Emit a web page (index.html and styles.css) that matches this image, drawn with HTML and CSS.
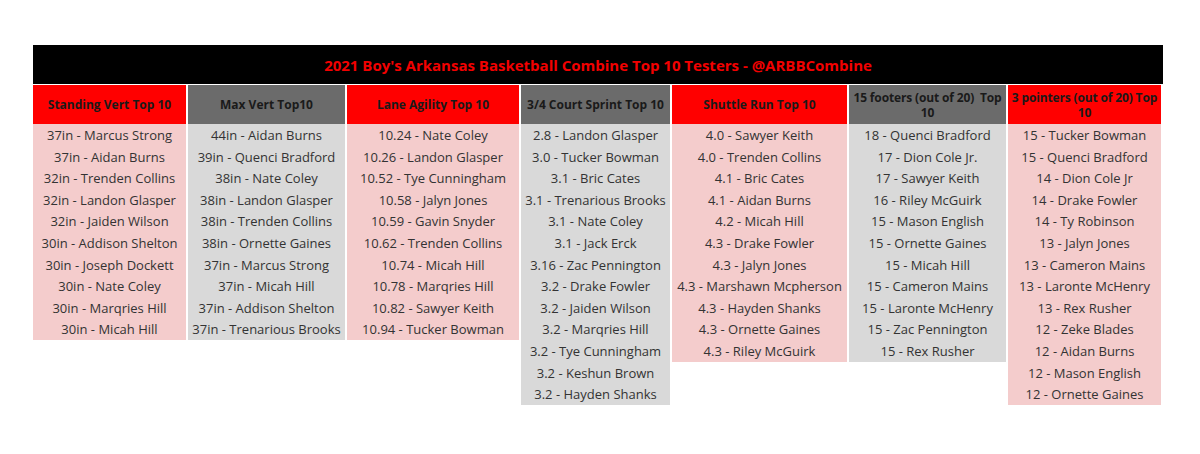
FILE: index.html
```html
<!DOCTYPE html>
<html>
<head>
<meta charset="utf-8">
<link rel="stylesheet" href="styles.css">
</head>
<body>
<div class="sheet">
  <div class="title">2021 Boy's Arkansas Basketball Combine Top 10 Testers - @ARBBCombine</div>
  <div class="cols">
    <div class="col red w1">
      <div class="head">Standing Vert Top 10</div>
      <div class="cell">37in - Marcus Strong</div>
      <div class="cell">37in - Aidan Burns</div>
      <div class="cell">32in - Trenden Collins</div>
      <div class="cell">32in - Landon Glasper</div>
      <div class="cell">32in - Jaiden Wilson</div>
      <div class="cell">30in - Addison Shelton</div>
      <div class="cell">30in - Joseph Dockett</div>
      <div class="cell">30in - Nate Coley</div>
      <div class="cell">30in - Marqries Hill</div>
      <div class="cell">30in - Micah Hill</div>
    </div>
    <div class="col gray w2">
      <div class="head">Max Vert Top10</div>
      <div class="cell">44in - Aidan Burns</div>
      <div class="cell">39in - Quenci Bradford</div>
      <div class="cell">38in - Nate Coley</div>
      <div class="cell">38in - Landon Glasper</div>
      <div class="cell">38in - Trenden Collins</div>
      <div class="cell">38in - Ornette Gaines</div>
      <div class="cell">37in - Marcus Strong</div>
      <div class="cell">37in - Micah Hill</div>
      <div class="cell">37in - Addison Shelton</div>
      <div class="cell">37in - Trenarious Brooks</div>
    </div>
    <div class="col red w3">
      <div class="head">Lane Agility Top 10</div>
      <div class="cell">10.24 - Nate Coley</div>
      <div class="cell">10.26 - Landon Glasper</div>
      <div class="cell">10.52 - Tye Cunningham</div>
      <div class="cell">10.58 - Jalyn Jones</div>
      <div class="cell">10.59 - Gavin Snyder</div>
      <div class="cell">10.62 - Trenden Collins</div>
      <div class="cell">10.74 - Micah Hill</div>
      <div class="cell">10.78 - Marqries Hill</div>
      <div class="cell">10.82 - Sawyer Keith</div>
      <div class="cell">10.94 - Tucker Bowman</div>
    </div>
    <div class="col gray w4">
      <div class="head">3/4 Court Sprint Top 10</div>
      <div class="cell">2.8 - Landon Glasper</div>
      <div class="cell">3.0 - Tucker Bowman</div>
      <div class="cell">3.1 - Bric Cates</div>
      <div class="cell">3.1 - Trenarious Brooks</div>
      <div class="cell">3.1 - Nate Coley</div>
      <div class="cell">3.1 - Jack Erck</div>
      <div class="cell">3.16 - Zac Pennington</div>
      <div class="cell">3.2 - Drake Fowler</div>
      <div class="cell">3.2 - Jaiden Wilson</div>
      <div class="cell">3.2 - Marqries Hill</div>
      <div class="cell">3.2 - Tye Cunningham</div>
      <div class="cell">3.2 - Keshun Brown</div>
      <div class="cell">3.2 - Hayden Shanks</div>
    </div>
    <div class="col red w5">
      <div class="head">Shuttle Run Top 10</div>
      <div class="cell">4.0 - Sawyer Keith</div>
      <div class="cell">4.0 - Trenden Collins</div>
      <div class="cell">4.1 - Bric Cates</div>
      <div class="cell">4.1 - Aidan Burns</div>
      <div class="cell">4.2 - Micah Hill</div>
      <div class="cell">4.3 - Drake Fowler</div>
      <div class="cell">4.3 - Jalyn Jones</div>
      <div class="cell">4.3 - Marshawn Mcpherson</div>
      <div class="cell">4.3 - Hayden Shanks</div>
      <div class="cell">4.3 - Ornette Gaines</div>
      <div class="cell">4.3 - Riley McGuirk</div>
    </div>
    <div class="col gray w6">
      <div class="head"><span class="lines">15 footers (out of 20)&nbsp; Top<br>10</span></div>
      <div class="cell">18 - Quenci Bradford</div>
      <div class="cell">17 - Dion Cole Jr.</div>
      <div class="cell">17 - Sawyer Keith</div>
      <div class="cell">16 - Riley McGuirk</div>
      <div class="cell">15 - Mason English</div>
      <div class="cell">15 - Ornette Gaines</div>
      <div class="cell">15 - Micah Hill</div>
      <div class="cell">15 - Cameron Mains</div>
      <div class="cell">15 - Laronte McHenry</div>
      <div class="cell">15 - Zac Pennington</div>
      <div class="cell">15 - Rex Rusher</div>
    </div>
    <div class="col red w7">
      <div class="head"><span class="lines">3 pointers (out of 20) Top<br>10</span></div>
      <div class="cell">15 - Tucker Bowman</div>
      <div class="cell">15 - Quenci Bradford</div>
      <div class="cell">14 - Dion Cole Jr</div>
      <div class="cell">14 - Drake Fowler</div>
      <div class="cell">14 - Ty Robinson</div>
      <div class="cell">13 - Jalyn Jones</div>
      <div class="cell">13 - Cameron Mains</div>
      <div class="cell">13 - Laronte McHenry</div>
      <div class="cell">13 - Rex Rusher</div>
      <div class="cell">12 - Zeke Blades</div>
      <div class="cell">12 - Aidan Burns</div>
      <div class="cell">12 - Mason English</div>
      <div class="cell">12 - Ornette Gaines</div>
    </div>
  </div>
</div>
</body>
</html>
```

FILE: styles.css
```css
html, body {
  margin: 0;
  padding: 0;
  background: #ffffff;
}
body {
  font-family: "Open Sans", "Liberation Sans", sans-serif;
  color: #333333;
}
.sheet {
  width: 1130px;
  margin: 45px 0 0 33px;
}
.title {
  height: 39px;
  background: #000000;
  color: #f20000;
  font-weight: 700;
  font-size: 15px;
  display: flex;
  align-items: center;
  justify-content: center;
  margin-bottom: 1px;
}
.cols {
  display: flex;
  align-items: flex-start;
  gap: 2px;
}
.col {
  display: flex;
  flex-direction: column;
}
.w1 { width: 153px; }
.w2 { width: 157px; }
.w3 { width: 172px; }
.w4 { width: 149px; }
.w5 { width: 175px; }
.w6 { width: 157px; }
.w7 { width: 153px; }
.head {
  height: 39px;
  display: flex;
  align-items: center;
  justify-content: center;
  text-align: center;
  font-weight: 700;
  font-size: 12px;
  line-height: 15px;
  color: #1a1a1a;
}
.lines {
  white-space: nowrap;
  letter-spacing: -0.15px;
}
.red .head { background: #ff0000; }
.gray .head { background: #6b6b6b; }
.cell {
  height: 21.6px;
  line-height: 21.6px;
  padding-top: 1px;
  box-sizing: border-box;
  text-align: center;
  font-size: 13px;
  white-space: nowrap;
}
.red .cell { background: #f4cccc; }
.gray .cell { background: #d9d9d9; }
```
